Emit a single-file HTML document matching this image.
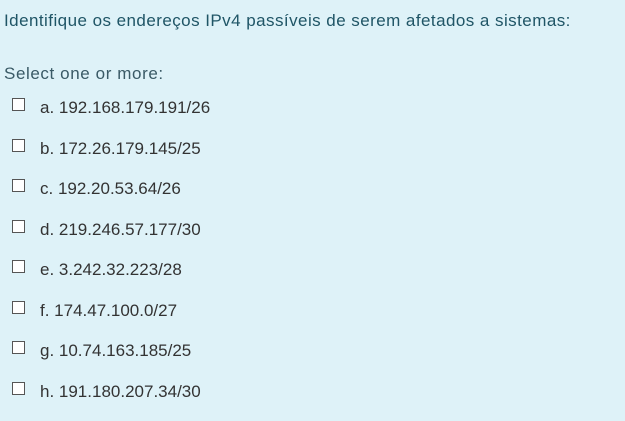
<!DOCTYPE html>
<html><head><style>
body{margin:0;width:625px;height:421px;background:#def2f8;font-family:"Liberation Sans",sans-serif;overflow:hidden;position:relative}
.q{position:absolute;left:4px;top:11px;font-size:17px;letter-spacing:0.45px;color:#1f5566;white-space:nowrap}
.s{position:absolute;left:4px;top:64px;font-size:17px;letter-spacing:0.6px;color:#3a5a66}
.r{position:absolute;left:12px;font-size:17px;color:#333;height:20px;line-height:20px}
.r i{position:absolute;left:0;top:1px;width:11px;height:11px;border:1.5px solid #555;background:#fff}
.r span{position:absolute;left:28px;top:1px;white-space:nowrap}
</style></head><body>
<div class="q">Identifique os endereços IPv4 passíveis de serem afetados a sistemas:</div>
<div class="s">Select one or more:</div>
<div class="r" style="top:97px"><i></i><span>a. 192.168.179.191/26</span></div>
<div class="r" style="top:138px"><i></i><span>b. 172.26.179.145/25</span></div>
<div class="r" style="top:178px"><i></i><span>c. 192.20.53.64/26</span></div>
<div class="r" style="top:219px"><i></i><span>d. 219.246.57.177/30</span></div>
<div class="r" style="top:259px"><i></i><span>e. 3.242.32.223/28</span></div>
<div class="r" style="top:300px"><i></i><span>f. 174.47.100.0/27</span></div>
<div class="r" style="top:340px"><i></i><span>g. 10.74.163.185/25</span></div>
<div class="r" style="top:381px"><i></i><span>h. 191.180.207.34/30</span></div>
</body></html>
